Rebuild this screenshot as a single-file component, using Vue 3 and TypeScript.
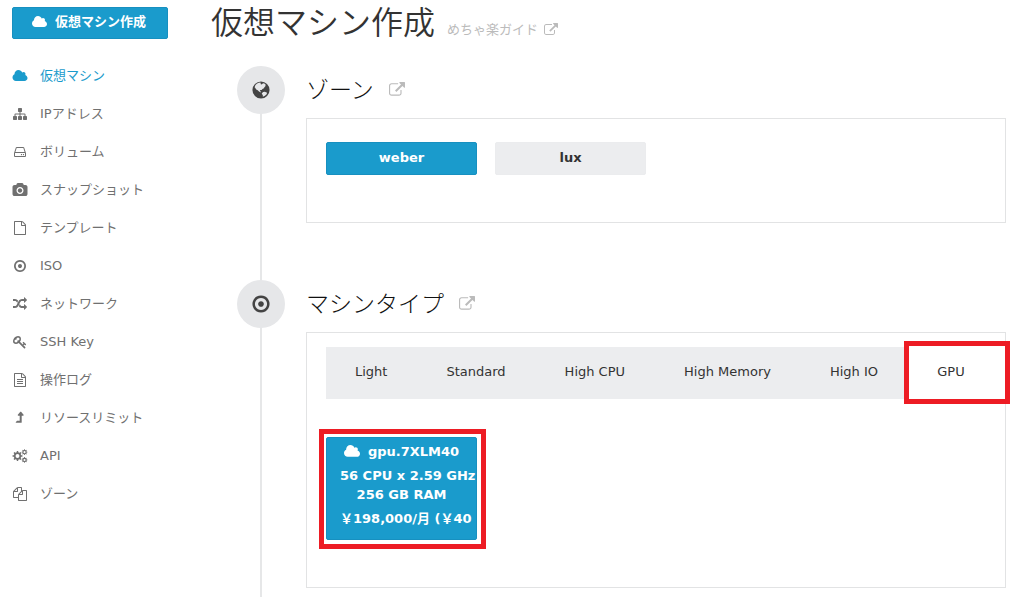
<script setup lang="ts">
import { ref } from 'vue'

interface Icon {
  box: string
  d: string
}

const fileOutline =
  'M1596 380q28 28 48 76t20 88v1152q0 40-28 68t-68 28h-1344q-40 0-68-28t-28-68v-1600q0-40 28-68t68-28h896q40 0 88 20t76 48zm-444-244v376h376q-10-29-22-41l-313-313q-12-12-41-22zm384 1528v-1024h-416q-40 0-68-28t-28-68v-416h-768v1536h1280z'

// Builds a toothed wheel with a round hole.
function gear(cx: number, cy: number, r: number, hole: number, teeth: number): string {
  const pts: string[] = []
  const step = (Math.PI * 2) / teeth
  for (let i = 0; i < teeth; i++) {
    for (const [offset, k] of [[-0.28, 0.76], [-0.17, 1], [0.17, 1], [0.28, 0.76]]) {
      const a = (i + offset) * step
      pts.push(`${Math.round(cx + Math.cos(a) * r * k)} ${Math.round(cy + Math.sin(a) * r * k)}`)
    }
  }
  return `M${pts.join('L')}zM${cx - hole} ${cy}a${hole} ${hole} 0 1 0 ${hole * 2} 0a${hole} ${hole} 0 1 0 ${-hole * 2} 0z`
}

const icons: Record<string, Icon> = {
  cloud: {
    box: '64 0 1920 1792',
    d: 'M1984 1152q0 159-112.5 271.5t-271.5 112.5h-1088q-185 0-316.5-131.5t-131.5-316.5q0-132 71-241.5t187-163.5q-2-28-2-43 0-212 150-362t362-150q158 0 286.5 88t187.5 230q70-62 166-62 106 0 181 75t75 181q0 75-41 138 129 30 213 134.5t84 239.5z',
  },
  sitemap: {
    box: '0 0 1792 1792',
    d: 'M1792 1248v320q0 40-28 68t-68 28h-320q-40 0-68-28t-28-68v-320q0-40 28-68t68-28h96v-192h-512v192h96q40 0 68 28t28 68v320q0 40-28 68t-68 28h-320q-40 0-68-28t-28-68v-320q0-40 28-68t68-28h96v-192h-512v192h96q40 0 68 28t28 68v320q0 40-28 68t-68 28h-320q-40 0-68-28t-28-68v-320q0-40 28-68t68-28h96v-192q0-52 38-90t90-38h512v-192h-96q-40 0-68-28t-28-68v-320q0-40 28-68t68-28h320q40 0 68 28t28 68v320q0 40-28 68t-68 28h-96v192h512q52 0 90 38t38 90v192h96q40 0 68 28t28 68z',
  },
  disk: {
    box: '0 0 1792 1792',
    d: 'M1168 1216q0 33-23.5 56.5t-56.5 23.5-56.5-23.5-23.5-56.5 23.5-56.5 56.5-23.5 56.5 23.5 23.5 56.5zm256 0q0 33-23.5 56.5t-56.5 23.5-56.5-23.5-23.5-56.5 23.5-56.5 56.5-23.5 56.5 23.5 23.5 56.5zm112 160v-320q0-13-9.5-22.5t-22.5-9.5h-1216q-13 0-22.5 9.5t-9.5 22.5v320q0 13 9.5 22.5t22.5 9.5h1216q13 0 22.5-9.5t9.5-22.5zm-1230-480h1180l-157-482q-4-13-16-21.5t-26-8.5h-782q-14 0-26 8.5t-16 21.5zm1358 160v320q0 66-47 113t-113 47h-1216q-66 0-113-47t-47-113v-320q0-25 16-75l197-606q17-53 63-86t101-33h782q55 0 101 33t63 86l197 606q16 50 16 75z',
  },
  camera: {
    box: '0 0 1920 1792',
    d: 'M960 672q119 0 203.5 84.5t84.5 203.5-84.5 203.5-203.5 84.5-203.5-84.5-84.5-203.5 84.5-203.5 203.5-84.5zm704-416q106 0 181 75t75 181v896q0 106-75 181t-181 75h-1408q-106 0-181-75t-75-181v-896q0-106 75-181t181-75h224l51-136q19-49 69.5-84.5t103.5-35.5h512q53 0 103.5 35.5t69.5 84.5l51 136h224zm-704 1152q185 0 316.5-131.5t131.5-316.5-131.5-316.5-316.5-131.5-316.5 131.5-131.5 316.5 131.5 316.5 316.5 131.5z',
  },
  file: { box: '0 0 1792 1792', d: fileOutline },
  fileText: {
    box: '0 0 1792 1792',
    d:
      fileOutline +
      'm-1024-864q0-14 9-23t23-9h704q14 0 23 9t9 23v64q0 14-9 23t-23 9h-704q-14 0-23-9t-9-23v-64zm736 224q14 0 23 9t9 23v64q0 14-9 23t-23 9h-704q-14 0-23-9t-9-23v-64q0-14 9-23t23-9h704zm0 256q14 0 23 9t9 23v64q0 14-9 23t-23 9h-704q-14 0-23-9t-9-23v-64q0-14 9-23t23-9h704z',
  },
  target: {
    box: '0 0 1792 1792',
    d: 'M1152 896q0 106-75 181t-181 75-181-75-75-181 75-181 181-75 181 75 75 181zm-256-544q-148 0-273 73t-198 198-73 273 73 273 198 198 273 73 273-73 198-198 73-273-73-273-198-198-273-73zm768 544q0 209-103 385.5t-279.5 279.5-385.5 103-385.5-103-279.5-279.5-103-385.5 103-385.5 279.5-279.5 385.5-103 385.5 103 279.5 279.5 103 385.5z',
  },
  shuffle: {
    box: '0 0 1792 1792',
    d: 'M666 481q-60 92-137 273-22-45-37-72.5t-40.5-63.5-51-56.5-63-35-81.5-14.5h-224q-14 0-23-9t-9-23v-192q0-14 9-23t23-9h224q250 0 410 225zm1126 799q0 14-9 23l-320 320q-9 9-23 9-13 0-22.5-9.5t-9.5-22.5v-192q-32 0-85 .5t-81 1-73-1-71-5-64-10.5-63-18.5-58-28.5-59-40-55-53.5-56-69.5q59-93 136-273 22 45 37 72.5t40.5 63.5 51 56.5 63 35 81.5 14.5h256v-192q0-14 9-23t23-9q12 0 24 10l319 319q9 9 9 23zm0-896q0 14-9 23l-320 320q-9 9-23 9-13 0-22.5-9.5t-9.5-22.5v-192h-256q-48 0-87 15t-69 45-51 61.5-45 77.5q-32 62-78 171-29 66-49.5 111t-54 105-64 100-74 83-90 68.5-106.5 42-128 16.5h-224q-14 0-23-9t-9-23v-192q0-14 9-23t23-9h224q48 0 87-15t69-45 51-61.5 45-77.5q32-62 78-171 29-66 49.5-111t54-105 64-100 74-83 90-68.5 106.5-42 128-16.5h256v-192q0-14 9-23t23-9q12 0 24 10l319 319q9 9 9 23z',
  },
  key: {
    box: '0 0 1792 1792',
    d: 'M832 512q0-80-56-136t-136-56-136 56-56 136q0 42 19 83-41-19-83-19-80 0-136 56t-56 136 56 136 136 56 136-56 56-136q0-42-19-83 41 19 83 19 80 0 136-56t56-136zm851 704q0 17-49 66t-66 49q-9 0-28.5-16t-36.5-33-38.5-40-24.5-26l-96 96 220 220q28 28 28 68 0 42-39 81t-81 39q-40 0-68-28l-671-671q-176 131-365 131-163 0-265.5-102.5t-102.5-265.5q0-160 95-313t248-248 313-95q163 0 265.5 102.5t102.5 265.5q0 189-131 365l355 355 96-96q-3-3-26-24.5t-40-38.5-33-36.5-16-28.5q0-17 49-66t66-49q13 0 23 10 6 6 46 44.5t82 79.5 86.5 86 73 78 28.5 41z',
  },
  levelUp: {
    box: '0 0 1792 1792',
    d: 'M1363 557q-18 35-58 35h-192v864q0 14-9 23t-23 9h-704q-21 0-29-18-8-20 4-35l160-192q9-11 25-11h320v-640h-192q-40 0-58-35-17-36 9-68l320-384q18-22 49-22t49 22l320 384q27 33 9 68z',
  },
  gears: {
    box: '0 0 1920 1792',
    d: gear(640, 896, 640, 250, 8) + gear(1540, 400, 370, 135, 8) + gear(1540, 1400, 370, 135, 8),
  },
  copy: {
    box: '0 0 1792 1792',
    d: 'M1696 384q40 0 68 28t28 68v1216q0 40-28 68t-68 28h-960q-40 0-68-28t-28-68v-288h-544q-40 0-68-28t-28-68v-672q0-40 20-88t48-76l408-408q28-28 76-48t88-20h416q40 0 68 28t28 68v328q68-40 128-40h416zm-544 213l-299 299h299v-299zm-640-384l-299 299h299v-299zm196 647l316-316v-416h-384v416q0 40-28 68t-68 28h-416v640h512v-256q0-40 20-88t48-76zm956 804v-1152h-384v416q0 40-28 68t-68 28h-416v640h896z',
  },
  external: {
    box: '0 0 1792 1792',
    d: 'M1408 928v320q0 119-84.5 203.5t-203.5 84.5h-832q-119 0-203.5-84.5t-84.5-203.5v-832q0-119 84.5-203.5t203.5-84.5h704q14 0 23 9t9 23v64q0 14-9 23t-23 9h-704q-66 0-113 47t-47 113v832q0 66 47 113t113 47h832q66 0 113-47t47-113v-320q0-14 9-23t23-9h64q14 0 23 9t9 23zm384-864v512q0 26-19 45t-45 19-45-19l-176-176-652 652q-10 10-23 10t-23-10l-114-114q-10-10-10-23t10-23l652-652-176-176q-19-19-19-45t19-45 45-19h512q26 0 45 19t19 45z',
  },
  globe: {
    box: '0 0 1792 1792',
    d: 'M896 128a768 768 0 1 0 0 1536a768 768 0 1 0 0-1536zM640 270L820 220L880 260L850 350L960 400L1080 290L1250 330L1310 420L1290 560L1200 640L1160 740L1030 800L950 900L850 890L790 960L890 1060L860 1120L720 1040L600 920L470 860L370 700L320 640L400 450L520 330zM1080 1080L1240 1060L1440 1140L1400 1280L1250 1420L1060 1500L1060 1370L960 1220z',
  },
}

const menu = [
  { label: '仮想マシン', icon: 'cloud' },
  { label: 'IPアドレス', icon: 'sitemap' },
  { label: 'ボリューム', icon: 'disk' },
  { label: 'スナップショット', icon: 'camera' },
  { label: 'テンプレート', icon: 'file' },
  { label: 'ISO', icon: 'target' },
  { label: 'ネットワーク', icon: 'shuffle' },
  { label: 'SSH Key', icon: 'key' },
  { label: '操作ログ', icon: 'fileText' },
  { label: 'リソースリミット', icon: 'levelUp' },
  { label: 'API', icon: 'gears' },
  { label: 'ゾーン', icon: 'copy' },
]

const zones = ['weber', 'lux']
const types = ['Light', 'Standard', 'High CPU', 'High Memory', 'High IO', 'GPU']
const zone = ref('weber')
const machineType = ref('GPU')
</script>

<template>
  <div class="layout">
    <aside class="sidebar">
      <button type="button" class="create">
        <svg class="icon" :viewBox="icons.cloud.box" aria-hidden="true"><path :d="icons.cloud.d" /></svg>
        仮想マシン作成
      </button>
      <nav class="menu">
        <a v-for="(item, i) in menu" :key="item.label" href="#" :class="{ current: i === 0 }">
          <svg class="icon" :viewBox="icons[item.icon].box" aria-hidden="true">
            <path fill-rule="evenodd" :d="icons[item.icon].d" />
          </svg>
          {{ item.label }}
        </a>
      </nav>
    </aside>

    <main class="main">
      <header class="title">
        <h1>仮想マシン作成</h1>
        <a href="#" class="guide">
          めちゃ楽ガイド
          <svg class="icon" :viewBox="icons.external.box" aria-hidden="true"><path :d="icons.external.d" /></svg>
        </a>
      </header>

      <section class="step">
        <div class="rail">
          <span class="dot">
            <svg :viewBox="icons.globe.box" aria-hidden="true"><path fill-rule="evenodd" :d="icons.globe.d" /></svg>
          </span>
        </div>
        <div class="body">
          <h2>
            ゾーン
            <a href="#" aria-label="ゾーン">
              <svg :viewBox="icons.external.box" aria-hidden="true"><path :d="icons.external.d" /></svg>
            </a>
          </h2>
          <div class="panel zones">
            <button
              v-for="z in zones"
              :key="z"
              type="button"
              class="choice"
              :class="{ selected: zone === z }"
              @click="zone = z"
            >
              {{ z }}
            </button>
          </div>
        </div>
      </section>

      <section class="step">
        <div class="rail">
          <span class="dot">
            <svg :viewBox="icons.target.box" aria-hidden="true"><path :d="icons.target.d" /></svg>
          </span>
        </div>
        <div class="body">
          <h2>
            マシンタイプ
            <a href="#" aria-label="マシンタイプ">
              <svg :viewBox="icons.external.box" aria-hidden="true"><path :d="icons.external.d" /></svg>
            </a>
          </h2>
          <div class="panel machines">
            <div class="tabs" role="tablist">
              <button
                v-for="t in types"
                :key="t"
                type="button"
                role="tab"
                class="tab"
                :class="{ active: machineType === t }"
                :aria-selected="machineType === t"
                @click="machineType = t"
              >
                {{ t }}
              </button>
            </div>
            <div class="plan-frame">
              <button type="button" class="plan">
                <span class="name">
                  <svg class="icon" :viewBox="icons.cloud.box" aria-hidden="true"><path :d="icons.cloud.d" /></svg>
                  gpu.7XLM40
                </span>
                <span class="cpu">56 CPU x 2.59 GHz</span>
                <span class="ram">256 GB RAM</span>
                <span class="price">￥198,000/月 (￥40</span>
              </button>
            </div>
          </div>
        </div>
      </section>
    </main>
  </div>
</template>

<style>
body {
  margin: 0;
  background: #fff;
}
</style>

<style scoped>
.layout {
  display: flex;
  height: 100vh;
  overflow: hidden;
  color: #333;
  font: 13px/20px 'DejaVu Sans', 'Noto Sans CJK JP', sans-serif;
}

svg {
  display: block;
  fill: currentColor;
  flex: none;
}

button {
  box-sizing: border-box;
  margin: 0;
  font: inherit;
  cursor: pointer;
}

a {
  color: inherit;
  text-decoration: none;
}

.sidebar {
  flex: none;
  box-sizing: border-box;
  width: 211px;
  padding: 7px 43px 0 12px;
}

.create {
  display: flex;
  align-items: center;
  justify-content: center;
  gap: 8px;
  width: 100%;
  height: 32px;
  padding: 0 2px 2px 0;
  border: 1px solid #1790c0;
  border-radius: 2px;
  background: #1a9bcc;
  color: #fff;
  font-weight: bold;
}

.create .icon {
  width: 15px;
  height: 14px;
}

.menu {
  margin-top: 18px;
  color: #707070;
}

.menu a {
  display: flex;
  align-items: center;
  gap: 12px;
  height: 38px;
  white-space: nowrap;
}

.menu .icon {
  width: 16px;
  height: 14px;
}

.menu .current {
  color: #1a9bcc;
}

.main {
  flex: 1;
  min-width: 0;
  display: flex;
  flex-direction: column;
}

.title {
  display: flex;
  align-items: baseline;
  gap: 12px;
  height: 66px;
  flex: none;
}

h1 {
  margin: 0;
  font-size: 32px;
  line-height: 46px;
  font-weight: 350;
}

.guide {
  display: flex;
  align-items: center;
  gap: 6px;
  color: #bbb;
}

.guide .icon {
  width: 14px;
  height: 14px;
}

.step {
  display: flex;
  gap: 21px;
  padding: 0 18px 0 26px;
}

.step:last-child {
  flex: 1 0 auto;
}

.rail {
  flex: none;
  width: 48px;
  background: linear-gradient(#e6e7e8, #e6e7e8) center / 2px 100% no-repeat;
}

.dot {
  display: flex;
  align-items: center;
  justify-content: center;
  height: 48px;
  border-radius: 50%;
  background: #e6e7e9;
  color: #444;
}

.dot svg {
  width: 20px;
  height: 20px;
}

.body {
  flex: 1;
  min-width: 0;
}

h2 {
  display: flex;
  align-items: center;
  gap: 15px;
  height: 48px;
  margin: 0 0 4px;
  color: #111;
  font-size: 23px;
  line-height: 48px;
  font-weight: 300;
}

h2 a {
  color: #bbb;
}

h2 svg {
  width: 16px;
  height: 16px;
}

.panel {
  box-sizing: border-box;
  border: 1px solid #e2e3e4;
}

.zones {
  display: flex;
  flex-wrap: wrap;
  gap: 18px;
  min-height: 105px;
  margin-bottom: 57px;
  padding: 23px 19px;
}

.choice {
  width: 151px;
  height: 33px;
  padding: 0 0 2px;
  border: 1px solid #ebecee;
  border-radius: 2px;
  background: #ecedef;
  color: #333;
  font-weight: bold;
}

.choice.selected {
  border-color: #1790c0;
  background: #1a9bcc;
  color: #fff;
}

.machines {
  padding: 14px 0 47px 19px;
}

.tabs {
  display: flex;
  gap: 1px;
  background: #ecedef;
}

.tab {
  position: relative;
  flex: none;
  height: 52px;
  padding: 0 29px 2px;
  border: 0;
  background: transparent;
  color: #333;
  white-space: nowrap;
}

.tab.active {
  flex: 1 0 auto;
  padding-right: 40px;
  background: #fff;
}

.tab.active::after,
.plan-frame::after {
  content: '';
  position: absolute;
  border: 5px solid #ed1c24;
  pointer-events: none;
}

.tab.active::after {
  inset: -6px -5px -5px -4px;
}

.plan-frame {
  position: relative;
  width: 151px;
  margin-top: 38px;
}

.plan-frame::after {
  inset: -8px -9px -9px -7px;
}

.plan {
  display: flex;
  flex-direction: column;
  width: 100%;
  height: 103px;
  padding: 4px 13px;
  overflow: hidden;
  border: 1px solid #1790c0;
  border-radius: 2px;
  background: #1a9bcc;
  color: #fff;
  font-weight: bold;
  line-height: 19px;
  text-align: center;
  white-space: nowrap;
}

.name {
  display: flex;
  align-items: center;
  justify-content: center;
  gap: 8px;
  margin-bottom: 5px;
}

.name .icon {
  width: 16px;
  height: 15px;
}

.ram {
  margin-bottom: 5px;
}

.cpu,
.price {
  text-align: left;
}
</style>
